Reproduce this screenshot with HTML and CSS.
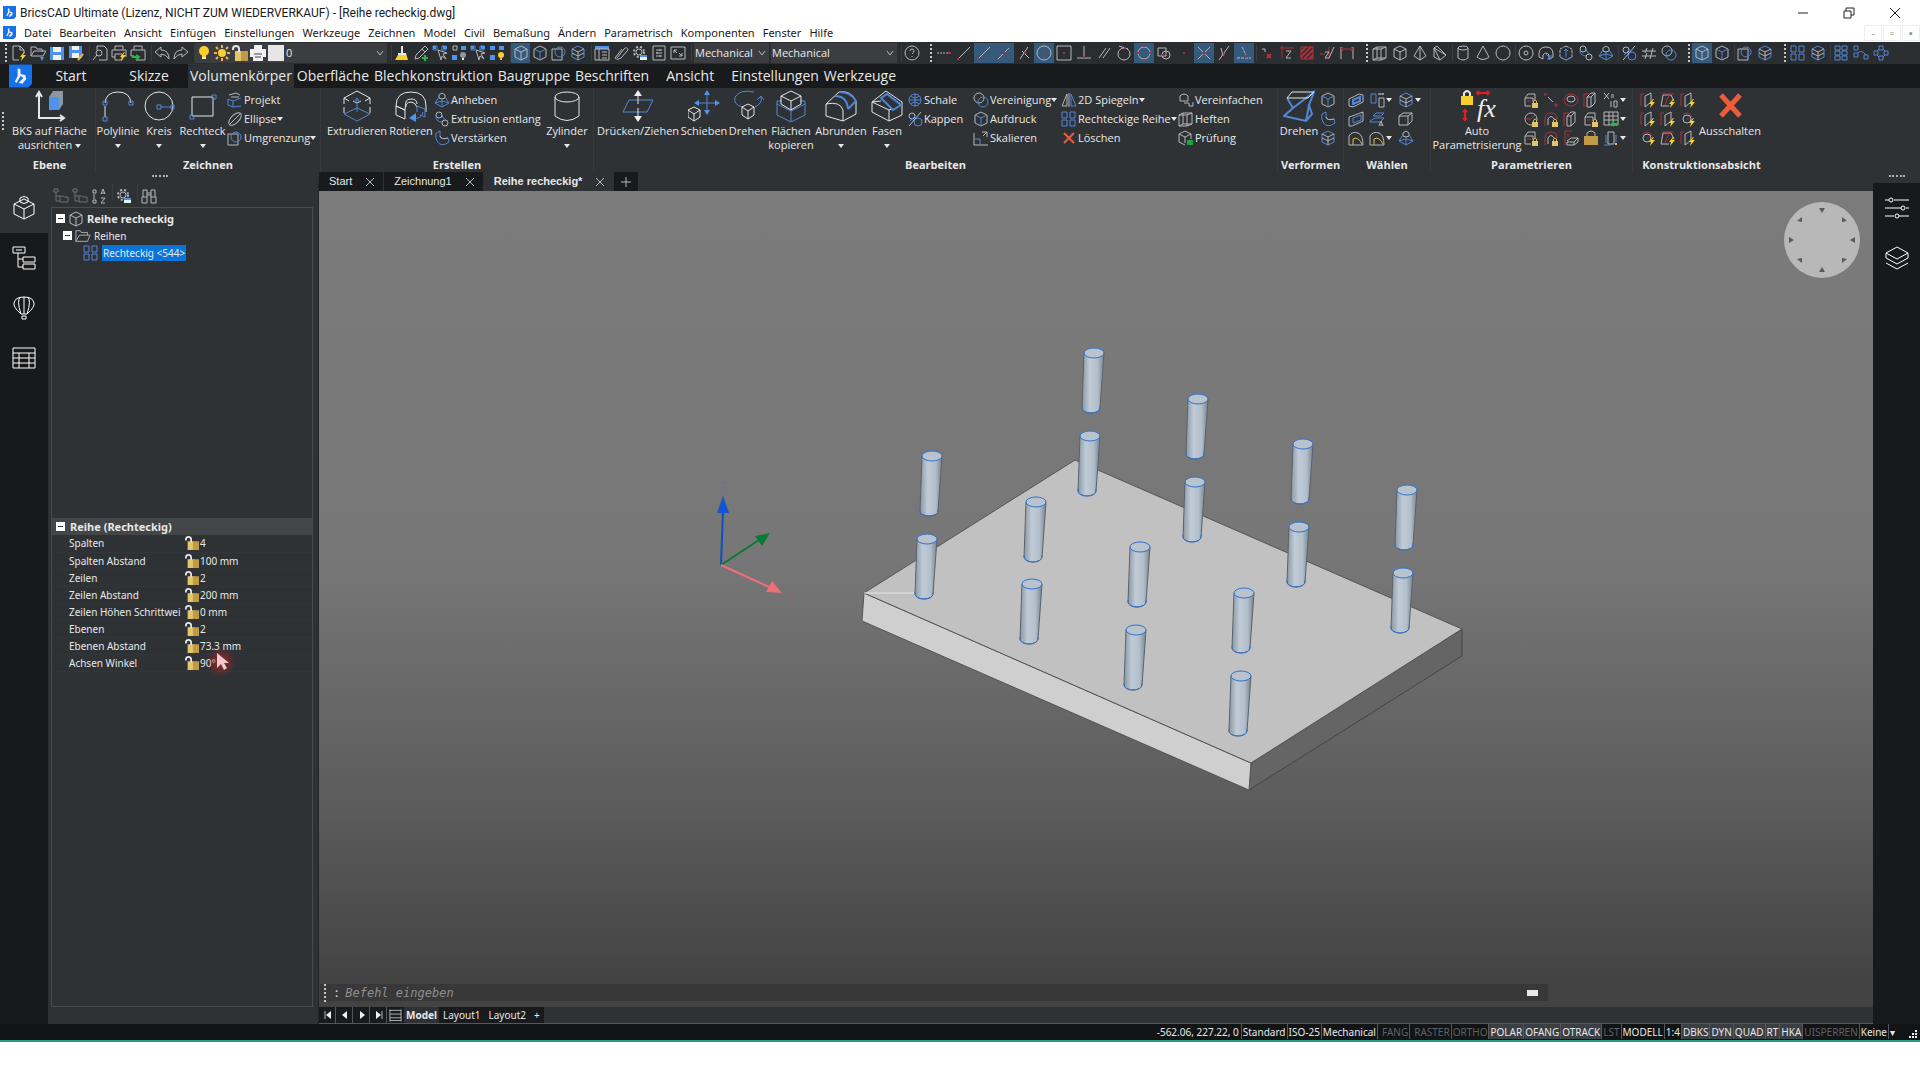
FILE: index.html
```
<!DOCTYPE html>
<html lang="de">
<head>
    <meta charset="UTF-8">
    <meta name="viewport" content="width=device-width, initial-scale=1.0">
    <title>BricsCAD Ultimate</title>
    <link rel="stylesheet" href="styles.css">
</head>
<body>

<!-- icon library -->
<svg class="defs" aria-hidden="true">
    <defs>
        <linearGradient id="tube" x1="0" x2="1" y1="0" y2="0">
            <stop offset="0" stop-color="#8b969f"/><stop offset=".35" stop-color="#bfcbd7"/>
            <stop offset=".7" stop-color="#b3c0cc"/><stop offset="1" stop-color="#78838d"/>
        </linearGradient>
        <radialGradient id="glow"><stop offset="0" stop-color="#d02020" stop-opacity=".7"/><stop offset="1" stop-color="#d02020" stop-opacity="0"/></radialGradient>
    </defs>

    <!-- small pieces that are reused in other icons -->
    <symbol id="bolt" viewBox="0 0 16 16"><path class="fy" d="M13 7l-4 5h2l-1 4 5-6h-3l2-3z"/></symbol>
    <symbol id="plock" viewBox="0 0 16 16"><rect class="fl" x="9" y="11" width="6" height="5"/><path class="y" d="M10.500 11V9q1.500-2 3 0v2"/></symbol>

    <symbol id="logo" viewBox="0 0 24 24"><path class="flogo" d="M0 0h24v20l-4 4H0z"/><path class="fw" d="M9 4l3 1v7l-4 7-2-1 3-6zM12 10l5 1 1 4-4 5-4-1 5-5-3-2z"/></symbol>
    <symbol id="new" viewBox="0 0 16 16"><path d="M2 1h7l4 4v3M2 1v14h6M9 1v4h4"/><use href="#bolt"/></symbol>
    <symbol id="open" viewBox="0 0 16 16"><path d="M1 11V2h5l1 2h5v3M1 11l3-5h12l-3 5z"/><path class="fb" d="M10 12h4l-2 4z"/></symbol>
    <symbol id="save" viewBox="0 0 16 16"><path class="fb" d="M1 2h14v13H1z"/><path class="fw" d="M4 2h8v5H4zM4 10h8v5H4z"/></symbol>
    <symbol id="saveas" viewBox="0 0 16 16"><path class="fb" d="M1 1h13v12H1z"/><path class="fw" d="M4 1h7v4H4zM4 8h7v5H4z"/><path class="y2" d="M10 15l5-6"/></symbol>
    <symbol id="preview" viewBox="0 0 16 16"><path d="M5 1h7l3 3v11H7M5 1v4"/><circle cx="7" cy="8" r="3"/><path d="M5 10l-4 5"/></symbol>
    <symbol id="plot" viewBox="0 0 16 16"><path d="M4 5V1h8v4M4 12H1V5h14v7M4 9h7v6H4z"/><use href="#bolt"/></symbol>
    <symbol id="publish" viewBox="0 0 16 16"><path d="M4 5V1h8v4M4 11H1V5h14v10H6"/><path class="g2" d="M2 12h7M6 10l3 2-3 3"/></symbol>
    <symbol id="undo" viewBox="0 0 16 16"><path d="M1 7l6-5v3q8 0 8 9-3-5-8-5v3z"/></symbol>
    <symbol id="redo" viewBox="0 0 16 16"><path d="M15 7L9 2v3q-8 0-8 9 3-5 8-5v3z"/></symbol>
    <symbol id="bulb" viewBox="0 0 16 16"><circle class="fy" cx="8" cy="6" r="5"/><path class="fy" d="M6 9h4v3H6z"/><path class="w2" d="M6 13h4"/></symbol>
    <symbol id="sun" viewBox="0 0 16 16"><circle class="fy" cx="8" cy="8" r="4"/><path class="y2" d="M8 0v3M8 13v3M0 8h3M13 8h3M2 2l2 2M12 12l2 2M14 2l-2 2M4 12l-2 2"/></symbol>
    <symbol id="unlock" viewBox="0 0 16 16"><path class="fl" d="M3 6h8v10H3z"/><path class="fl2" d="M9 6h7v10H9z"/><path class="w2" d="M1 5V4q0-3 3-3t3 3v3"/></symbol>
    <symbol id="printer" viewBox="0 0 16 16"><path class="fw" d="M4 0h8v4h4v8h-3v4H3v-4H0V4h4z"/><path d="M4 9h8M5 12h6" stroke="#444"/></symbol>
    <symbol id="chev" viewBox="0 0 8 8"><path d="M1 2l3 4 3-4"/></symbol>
    <symbol id="brush" viewBox="0 0 16 16"><path class="fy" d="M4 10l8-2 2 7H1z"/><path class="w2" d="M8 1v7M4 9h8"/></symbol>
    <symbol id="picker" viewBox="0 0 16 16"><path d="M2 14l1-4 6-6 3 3-6 6zM9 4l3-3 3 3-3 3"/><path class="g2" d="M9 13h6M12 10v6"/></symbol>
    <symbol id="selcur" viewBox="0 0 16 16"><path class="b" d="M1 1h4v4H1zM10 1h4v4h-4z"/><path class="fb" d="M1 1h3v3H1zM11 1h4v3h-4z"/><path d="M6 5l3 10 1-4 4 3-3-5 4-1z"/></symbol>
    <symbol id="selblk" viewBox="0 0 16 16"><path d="M2 1h4v4H2z"/><path class="fb" d="M1 10h5v5H1zM10 1h5v4h-5z"/><circle class="fg" cx="12" cy="10" r="3"/><path class="w2" d="M11 14h2"/></symbol>
    <symbol id="sellamp" viewBox="0 0 16 16"><path class="fb" d="M1 1h5v4H1zM10 1h5v4h-5zM1 10h5v5H1z"/><circle class="fy" cx="12" cy="10" r="3"/><path class="y2" d="M11 14h2"/></symbol>
    <symbol id="cube" viewBox="0 0 16 16"><path d="M8 1l6 3v8l-6 3-6-3V4z"/><path class="b" d="M2 4l6 3 6-3M8 7v8"/></symbol>
    <symbol id="cubew" viewBox="0 0 16 16"><path d="M8 1l6 3v8l-6 3-6-3V4zM2 4l6 3 6-3M8 7v8"/></symbol>
    <symbol id="cubeb" viewBox="0 0 16 16"><path class="b" d="M8 1l6 3v8l-6 3-6-3V4z"/><path d="M2 4l6 3 6-3M8 7v8M2 8l6 3 6-3"/></symbol>
    <symbol id="circsq" viewBox="0 0 16 16"><path d="M1 4h10v11H1z"/><circle class="b" cx="9" cy="7" r="5"/></symbol>
    <symbol id="props" viewBox="0 0 16 16"><path class="fb" d="M1 1h14v3H1z"/><path d="M1 4h14v11H1zM8 7h5M8 10h5M8 13h5M5 4v11"/></symbol>
    <symbol id="clip" viewBox="0 0 16 16"><path d="M4 13l7-9q3-3 4 1l-7 8q-4 3-6 0l7-9"/></symbol>
    <symbol id="gear" viewBox="0 0 16 16"><circle cx="7" cy="7" r="3"/><circle cx="7" cy="7" r="5" stroke-dasharray="2 2" stroke-width="2"/><path class="fw" d="M8 10h7v5H8z"/><path class="fb" d="M8 10h7v2H8z"/></symbol>
    <symbol id="sheet" viewBox="0 0 16 16"><path d="M2 1h12v14H2zM5 5h6M5 8h6M5 11h6M9 4v2M6 7v2M9 10v2"/></symbol>
    <symbol id="expand" viewBox="0 0 16 16"><path d="M1 2h14v12H1zM4 8V5h3M4 5l3 3M12 8v3H9M12 11L9 8"/></symbol>
    <symbol id="help" viewBox="0 0 16 16"><circle cx="8" cy="8" r="7"/><path d="M6 6q0-2 2-2t2 2q0 1-2 3M8 11v1"/></symbol>

    <!-- object snaps -->
    <symbol id="s1" viewBox="0 0 16 16"><path d="M1 8h14" stroke-dasharray="2 1"/><path class="r2" d="M12 8h3"/></symbol>
    <symbol id="s2" viewBox="0 0 16 16"><path d="M2 14L14 2"/><path class="r2" d="M1 14h2"/></symbol>
    <symbol id="s3" viewBox="0 0 16 16"><path d="M2 14L13 3"/><path class="r2" d="M7 8h2"/></symbol>
    <symbol id="s4" viewBox="0 0 16 16"><path d="M4 14l8-12M6 6l7 7"/><path class="r2" d="M8 8h2"/></symbol>
    <symbol id="s5" viewBox="0 0 16 16"><circle cx="8" cy="8" r="7"/><path class="r2" d="M7 8h2"/></symbol>
    <symbol id="s6" viewBox="0 0 16 16"><path d="M1 1h14v14H1z"/><path class="r2" d="M7 8h2"/></symbol>
    <symbol id="s7" viewBox="0 0 16 16"><path d="M1 13h14M8 1v12"/><path class="r2" d="M7 12h2"/></symbol>
    <symbol id="s8" viewBox="0 0 16 16"><path d="M3 13l7-10M7 13l7-10"/></symbol>
    <symbol id="s9" viewBox="0 0 16 16"><circle cx="8" cy="9" r="6"/><path d="M3 1l9 3"/><path class="r2" d="M8 3h2"/></symbol>
    <symbol id="s10" viewBox="0 0 16 16"><circle cx="8" cy="8" r="6"/><path class="r2" d="M7 1h2M7 15h2M1 8h2M13 8h2"/></symbol>
    <symbol id="s11" viewBox="0 0 16 16"><path d="M2 3h8v8H2z"/><circle cx="10" cy="10" r="4"/><path class="r2" d="M6 10h2"/></symbol>
    <symbol id="s12" viewBox="0 0 16 16"><path class="r2" d="M7 8h2"/></symbol>
    <symbol id="s13" viewBox="0 0 16 16"><path d="M2 2l12 12M14 2L2 14"/><path class="r2" d="M7 8h2"/></symbol>
    <symbol id="s14" viewBox="0 0 16 16"><path d="M3 15L13 1M5 3l2 8"/><path class="r2" d="M7 9h2"/></symbol>
    <symbol id="s15" viewBox="0 0 16 16"><path d="M1 13h14M6 2l4 8" stroke-dasharray="3 1"/><path class="r2" d="M9 12h2"/></symbol>
    <symbol id="s16" viewBox="0 0 16 16"><path d="M3 4h3v3"/><path class="r2" d="M8 9l4 4M12 9l-4 4"/></symbol>
    <symbol id="s17" viewBox="0 0 16 16"><path class="r" d="M1 3h14M3 1v12"/><path d="M7 6h5l-5 7h5"/></symbol>
    <symbol id="s18" viewBox="0 0 16 16"><path d="M2 2h12v12H2z" stroke="#b33"/><path class="r2" d="M2 7l5-5M2 12L12 2M5 14l9-9M10 14l4-4"/></symbol>
    <symbol id="s19" viewBox="0 0 16 16"><path class="r" d="M1 9h5M10 14V2"/><path d="M6 7h4l-4 6h4M10 13l5-11"/></symbol>
    <symbol id="s20" viewBox="0 0 16 16"><path d="M2 2v12M14 2v12"/><path class="r" d="M2 4h12M4 2L2 4l2 2M12 2l2 2-2 2"/></symbol>

    <!-- solids -->
    <symbol id="box" viewBox="0 0 16 16"><path d="M1 4l4-2v11l-4 2zM5 2h9v11H5M1 15h8l5-2M9 4v11M1 4h8l5-2"/></symbol>
    <symbol id="pyr" viewBox="0 0 16 16"><path d="M8 1L2 11l6 4 6-4zM8 1v14"/></symbol>
    <symbol id="wedge" viewBox="0 0 16 16"><path d="M2 3v9l6 3 6-5zM2 3l3-2 9 9M2 3l6 12"/></symbol>
    <symbol id="cyl" viewBox="0 0 16 16"><ellipse cx="8" cy="3" rx="5" ry="2"/><path d="M3 3v10q5 4 10 0V3"/></symbol>
    <symbol id="cone" viewBox="0 0 16 16"><path d="M8 1L2 12q6 5 12 0z"/></symbol>
    <symbol id="ball" viewBox="0 0 16 16"><circle cx="8" cy="8" r="7"/></symbol>
    <symbol id="torus" viewBox="0 0 16 16"><circle cx="8" cy="8" r="7"/><circle cx="8" cy="8" r="2"/></symbol>
    <symbol id="revs" viewBox="0 0 16 16"><path d="M1 9q0-7 7-7t7 7v3l-4 2v-4q-3-4-6 0v4l-4-2z"/><path class="b" d="M8 9l5 5M9 14h4v-4"/></symbol>
    <symbol id="extrs" viewBox="0 0 16 16"><path d="M8 1l6 3v8l-6 3-6-3V4z" stroke-dasharray="3 1"/><path class="b" d="M2 12l6 3 6-3M8 12V4M6 6l2-2 2 2"/></symbol>
    <symbol id="sweep" viewBox="0 0 16 16"><circle cx="5" cy="4" r="3"/><circle cx="11" cy="12" r="3"/><path class="b" d="M2 5q0 6 6 6M8 4q0 3 4 5"/></symbol>
    <symbol id="loft" viewBox="0 0 16 16"><path d="M5 3l3-2 3 2v3l-3 1-3-1z"/><path class="b" d="M5 5l-4 6 7 4 7-4-4-6M8 7v8M1 11l7-2 7 2"/></symbol>
    <symbol id="thick" viewBox="0 0 16 16"><path class="b" d="M2 3l4-2v5q1 4 8 2l1 4q-8 6-12-1-2-3-1-8z"/><path d="M6 6q1 4 8 2"/></symbol>
    <symbol id="slice" viewBox="0 0 16 16"><circle cx="5" cy="5" r="3"/><circle class="b" cx="11" cy="11" r="4"/><path d="M2 15L14 1"/><path class="b" d="M3 10l6-6"/></symbol>
    <symbol id="sect" viewBox="0 0 16 16"><path d="M1 6h14M1 11h14M4 8l2-5M9 14l3-11M4 14l2-6"/></symbol>
    <symbol id="union" viewBox="0 0 16 16"><circle cx="6" cy="6" r="5"/><circle class="b" cx="10" cy="10" r="5"/></symbol>
    <symbol id="shell" viewBox="0 0 16 16"><circle class="b" cx="8" cy="8" r="6"/><path class="b" d="M2 8h12M8 2v12M4 4q4 4 8 0M4 12q4-4 8 0"/></symbol>
    <symbol id="arr4" viewBox="0 0 16 16"><path class="b" d="M1 1h5v6H1zM9 1h5v6H9zM1 9h5v6H1zM9 9h5v6H9z"/></symbol>
    <symbol id="arr6" viewBox="0 0 16 16"><path class="b" d="M2 1h5v4H2zM9 1h5v4H9zM2 6h5v4H2zM9 6h5v4H9zM2 11h5v4H2zM9 11h5v4H9z"/></symbol>
    <symbol id="arrp" viewBox="0 0 16 16"><path class="b" d="M1 1h4v4H1zM1 8h4v4H1zM11 10h4v4h-4zM5 8q3-4 8 2"/></symbol>
    <symbol id="arro" viewBox="0 0 16 16"><path class="b" d="M6 1h4v4H6zM6 11h4v4H6zM1 6h4v4H1zM11 6h4v4h-4zM4 6l2-2M10 4l2 2M4 10l2 2M12 10l-2 2"/></symbol>

    <!-- small ribbon icons -->
    <symbol id="proj" viewBox="0 0 16 16"><path d="M2 3l7-2 4 2M4 5h8"/><path class="b" d="M1 7l5 2v6l-5-2zM6 9l8-3M6 15l8-1"/></symbol>
    <symbol id="elli" viewBox="0 0 16 16"><ellipse cx="8" cy="8" rx="8" ry="4" transform="rotate(-45 8 8)"/><path d="M3 13L13 3"/></symbol>
    <symbol id="scale" viewBox="0 0 16 16"><path d="M1 3v12h14M9 2h5v5M14 2l-4 4"/><path class="b" d="M1 9h6v6"/></symbol>
    <symbol id="mirror" viewBox="0 0 16 16"><path d="M1 14L6 2v12zM8 1v14"/><path class="b" d="M15 14L10 2v12z"/></symbol>
    <symbol id="del" viewBox="0 0 16 16"><path class="x2" d="M3 3l10 10M13 3L3 13"/></symbol>
    <symbol id="simp" viewBox="0 0 16 16"><path d="M2 8V4q4-4 8 0v5H2zM6 11h5v3h4v-4"/></symbol>
    <symbol id="check" viewBox="0 0 16 16"><path d="M7 1l6 3v5M7 1L1 4v8l6 3M1 4l6 3 6-3M7 7v6"/><rect class="fgr" x="9" y="10" width="6" height="5" rx="1"/></symbol>
    <symbol id="wcube" viewBox="0 0 16 16"><path d="M1 5l4-3h9v8l-4 4H1zM1 5h9v9M10 5l4-3"/></symbol>
    <symbol id="face" viewBox="0 0 16 16"><path d="M1 7l10-5 4 1v7L5 15l-4-1z"/><path class="b2" d="M5 8l7-3v4l-7 3z"/></symbol>
    <symbol id="face2" viewBox="0 0 16 16"><path d="M1 6l3-1 11-4v9L4 15H1z"/><path class="b" d="M5 7l8-3v5l-8 3z"/></symbol>
    <symbol id="seltube" viewBox="0 0 16 16"><path class="b" d="M2 2h5v9H2z"/><path d="M10 6h5v9h-5zM9 2h6M11 1v2M14 1v2"/></symbol>
    <symbol id="selA" viewBox="0 0 16 16"><path class="b" d="M1 10l5-3h9l-4 4H1zM4 5l3-3h8l-3 3z"/><path d="M10 15l2-5 2 5M11 14h3"/></symbol>
    <symbol id="sarc" viewBox="0 0 16 16"><path d="M1 15V6q3-5 9-3 5 2 5 12z"/><path class="y" d="M5 15V9q5-3 9 5"/></symbol>
    <symbol id="plc" viewBox="0 0 16 16"><path d="M2 6l3-4h7v6M2 6h8v4M2 6v8h6"/><path class="r" d="M4 9h4"/><use href="#plock"/></symbol>
    <symbol id="pla" viewBox="0 0 16 16"><path class="r" d="M2 15V8q0-6 6-6t6 6"/><path d="M5 14V8q3-5 6 0"/><use href="#plock"/></symbol>
    <symbol id="prad" viewBox="0 0 16 16"><circle cx="8" cy="8" r="6"/><path class="r" d="M1 8h7l5-5"/><use href="#plock"/></symbol>
    <symbol id="pdot" viewBox="0 0 16 16"><path class="r" d="M1 2h3M11 13h4M13 11v4M2 1v3"/><path d="M5 5l5 5"/></symbol>
    <symbol id="pring" viewBox="0 0 16 16"><ellipse class="r" cx="8" cy="8" rx="7" ry="6"/><ellipse cx="8" cy="7" rx="4" ry="3"/></symbol>
    <symbol id="pbox" viewBox="0 0 16 16"><path d="M4 5l4-4h4v10l-4 4H4zM4 5h4v10M8 5l4-4"/><path class="r" d="M1 15V2M1 2h6"/></symbol>
    <symbol id="pwide" viewBox="0 0 16 16"><path d="M4 11l4-3h7l-4 4H4v3h7l4-3V8M11 12v3"/><path class="r" d="M2 15V1h7M5 4v3"/></symbol>
    <symbol id="plock2" viewBox="0 0 16 16"><path class="fl2" d="M1 6h14v9H1z"/><path d="M4 6V3q4-4 8 0v3"/></symbol>
    <symbol id="px10" viewBox="0 0 16 16"><path d="M1 1l5 6M6 1L1 7M8 3h3M8 5h3M8 9v6M11 9h3v6h-3z"/></symbol>
    <symbol id="ptab" viewBox="0 0 16 16"><path d="M1 1h14v13H1zM1 5h14M1 9h14M6 1v13M10 1v13"/><path class="g2" d="M9 13h6M11 11l-2 2 2 2"/></symbol>
    <symbol id="ptube" viewBox="0 0 16 16"><path d="M5 2h6v12H5z"/><path class="b" d="M3 5v8M1 15h6M13 5v7"/><path class="y2" d="M12 14h2"/></symbol>
    <symbol id="kp" viewBox="0 0 16 16"><path d="M5 4l6-3v9l-6 5z"/><path class="r" d="M1 14V2h3"/><use href="#bolt"/></symbol>
    <symbol id="kt" viewBox="0 0 16 16"><path d="M3 3h8l3 6M3 3L1 14h8"/><path class="r" d="M2 2h12M5 13l4-10"/><use href="#bolt"/></symbol>
    <symbol id="kc" viewBox="0 0 16 16"><circle cx="7" cy="8" r="4"/><path class="r" d="M3 4q5-5 9 2M7 8h2"/><use href="#bolt"/></symbol>

    <!-- large ribbon icons -->
    <symbol id="L-bks" viewBox="0 0 32 32"><path class="w2" d="M5 3v25h25M2 7l3-5 3 5M26 25l4 3-4 3"/><path class="fb" d="M15 7h10v13H15z"/><path class="fg" d="M15 7l4-6h10l-4 6zM25 7l4-6v13l-4 6z"/></symbol>
    <symbol id="L-poly" viewBox="0 0 32 32"><path class="w1" d="M3 13q1-11 13-11t13 11M3 16v11"/><path class="b1" d="M1 11h4v4H1zM27 11h4v4h-4zM1 27h4v4H1z"/></symbol>
    <symbol id="L-circ" viewBox="0 0 32 32"><circle class="w1" cx="16" cy="16" r="14"/><path class="b1" d="M14 15h4v4h-4zM28 15h3v4h-3zM18 17h10"/></symbol>
    <symbol id="L-rect" viewBox="0 0 32 32"><path class="w1" d="M5 7h21v19H5z"/><path class="b1" d="M25 5h4v4h-4zM3 25h4v4H3z"/></symbol>
    <symbol id="L-ext" viewBox="0 0 32 32"><path class="w1" d="M16 1L3 8v6M16 1l13 7v6M3 17v6M29 17v6M3 8l5 3M29 8l-5 3M16 13l-4-2M16 13l4-2"/><path class="b1" d="M3 24l13 7 13-7M3 24l13-6 13 6M16 22V9M13 12l3-4 3 4"/></symbol>
    <symbol id="L-rev" viewBox="0 0 32 32"><path class="w1" d="M1 16Q1 2 16 2t15 14v6M1 16v9l9 4v-9zM10 20q0-8 6-8 4 0 6 5M1 16l9 4M11 17q-2-8 5-8 6 0 6 5"/><path class="b1" d="M22 16l8 3v8l-5-2M22 16v6M28 22q-2 8-10 6"/><path class="fb" d="M21 23l-7 5 7 4z"/></symbol>
    <symbol id="L-cyl" viewBox="0 0 32 32"><ellipse class="w1" cx="16" cy="7" rx="12" ry="5"/><path class="w1" d="M4 7v19q12 9 24 0V7"/></symbol>
    <symbol id="L-push" viewBox="0 0 32 32"><path class="b1" d="M7 10h24l-6 12H1z"/><path class="w1" d="M16 3v11M16 18v11"/><path class="fw" d="M12 6l4-6 4 6zM12 26l4 6 4-6z"/></symbol>
    <symbol id="L-move" viewBox="0 0 32 32"><path class="b1" d="M19 3v21M9 13h21"/><path class="fb" d="M16 5l3-5 3 5zM16 20l3 5 3-5zM11 10l-5 3 5 3zM27 10l5 3-5 3z"/><path class="w1" d="M6 17l6 3v7l-6 4-6-4v-7zM0 20l6 4 6-4M6 24v7"/></symbol>
    <symbol id="L-rot" viewBox="0 0 32 32"><path class="b1" d="M22 2Q8-1 3 7q-2 8 8 10M29 7q2 6-6 10M25 10l4-4 3 4"/><path class="w1" d="M16 14l6 3v8l-6 4-6-4v-8zM10 17l6 4 6-4M16 21v8"/></symbol>
    <symbol id="L-copy" viewBox="0 0 32 32"><path class="b1" d="M7 11H2v14l14 7 14-7V11h-5M2 14l14 7 14-7M16 21v11"/><path class="w1" d="M16 1l10 5v8l-10 6-10-6V6zM6 6l10 5 10-5M16 11v9"/></symbol>
    <symbol id="L-fil" viewBox="0 0 32 32"><path class="w1" d="M1 14L14 2q12-2 17 9v13L18 31 1 26zM1 14q14-3 17 6v11"/><path class="b2" d="M10 6q12 0 13 13M14 2q12 0 17 9M23 19l8-8"/></symbol>
    <symbol id="L-cha" viewBox="0 0 32 32"><path class="w1" d="M1 12L15 1l16 11v13L18 31 1 22zM1 12l9-1M18 31V20L1 12M18 20l3-1"/><path class="b2" d="M10 8l6-4 14 11-8 5z"/></symbol>
    <symbol id="L-twi" viewBox="0 0 32 32"><path class="b2" d="M4 8l6 10-9 8 22 5 6-7-3-9 5-13L10 18M26 15l-3 16"/><path class="w1" d="M9 2h22l-6 6H4z"/></symbol>
    <symbol id="L-off" viewBox="0 0 32 32"><path class="x5" d="M7 5l19 21M26 5L7 26"/></symbol>

    <!-- dock icons -->
    <symbol id="D-struct" viewBox="0 0 24 24"><path d="M12 3l10 5v10l-10 5-10-5V8zM2 8l10 5 10-5M12 13v10"/><path d="M8 2v4q4 3 8 0V2q-4-3-8 0z"/></symbol>
    <symbol id="D-tree" viewBox="0 0 24 24"><path d="M1 1h12v6H1zM11 11h12v5H11zM11 18h12v5H11zM6 7v14h5M6 13h5M4 4h6"/></symbol>
    <symbol id="D-balloon" viewBox="0 0 24 24"><path d="M9 18Q1 11 2 7q1-6 10-6t10 6q1 4-7 11zM9 18Q4 3 9 1M15 18q5-15 0-17M12 1v17M10 20h4v3h-4z"/></symbol>
    <symbol id="D-table" viewBox="0 0 24 24"><path d="M1 2h22v20H1zM1 7h22M1 12h22M1 17h22M7 7v15M17 7v15"/></symbol>
    <symbol id="D-sliders" viewBox="0 0 24 24"><path d="M0 4h4M9 4h15M0 12h16M21 12h3M0 20h9M14 20h10"/><circle cx="6" cy="4" r="2"/><circle cx="18" cy="12" r="2"/><circle cx="12" cy="20" r="2"/></symbol>
    <symbol id="D-layers" viewBox="0 0 24 24"><path d="M12 1l11 6-11 6L1 7zM1 12l11 6 11-6M1 17l11 6 11-6M1 7v5M23 7v5"/></symbol>

    <symbol id="treef" viewBox="0 0 16 16"><path class="dim" d="M1 1h4v3H1zM3 4v9h4M3 8h4M7 8h3l1 1h4v5H7z"/></symbol>
    <symbol id="az" viewBox="0 0 16 16"><path d="M2 2h3v3H2zM2 12h3v3H2zM3 6v5M10 6l2-5 2 5M10 5h4M10 10h4l-4 5h4"/></symbol>
    <symbol id="bino" viewBox="0 0 16 16"><path d="M1 9h5v6H1zM10 9h5v6h-5zM2 9V2h4v7M10 9V2h4v7M6 5h4M6 7h4"/></symbol>
    <symbol id="folder" viewBox="0 0 18 14"><path d="M1 13V1h5l1 2h7v3M1 13l4-7h12l-3 7z"/></symbol>
</svg>

<header class="titlebar">
    <svg class="app-icon"><use href="#logo"/></svg>
    <h1>BricsCAD Ultimate (Lizenz, NICHT ZUM WIEDERVERKAUF) - [Reihe recheckig.dwg]</h1>
    <div class="window-buttons">
        <button aria-label="Minimieren"><svg viewBox="0 0 12 12"><path d="M1 6h10"/></svg></button>
        <button aria-label="Wiederherstellen"><svg viewBox="0 0 12 12"><path d="M1 4h7v7H1zM3 4V1h8v7H8"/></svg></button>
        <button aria-label="Schließen"><svg viewBox="0 0 12 12"><path d="M1 1l10 10M11 1L1 11"/></svg></button>
    </div>
</header>

<nav class="menubar">
    <svg class="app-icon"><use href="#logo"/></svg>
    <a href="#">Datei</a><a href="#">Bearbeiten</a><a href="#">Ansicht</a><a href="#">Einfügen</a><a href="#">Einstellungen</a><a href="#">Werkzeuge</a><a href="#">Zeichnen</a><a href="#">Model</a><a href="#">Civil</a><a href="#">Bemaßung</a><a href="#">Ändern</a><a href="#">Parametrisch</a><a href="#">Komponenten</a><a href="#">Fenster</a><a href="#">Hilfe</a>
    <div class="mdi-buttons">
        <button aria-label="Dokument minimieren">-</button><button aria-label="Dokument wiederherstellen">▫</button><button aria-label="Dokument schließen">▪</button>
    </div>
</nav>

<div class="toolbars">
    <div class="bar">
        <i class="grip"></i>
        <button class="tb" aria-label="Neu"><svg><use href="#new"/></svg></button>
        <button class="tb" aria-label="Öffnen"><svg><use href="#open"/></svg></button>
        <button class="tb" aria-label="Speichern"><svg><use href="#save"/></svg></button>
        <button class="tb" aria-label="Speichern unter"><svg><use href="#saveas"/></svg></button>
        <i class="sep"></i>
        <button class="tb" aria-label="Vorschau"><svg><use href="#preview"/></svg></button>
        <button class="tb" aria-label="Drucken"><svg><use href="#plot"/></svg></button>
        <button class="tb" aria-label="Publizieren"><svg><use href="#publish"/></svg></button>
        <i class="sep"></i>
        <button class="tb" aria-label="Zurück"><svg><use href="#undo"/></svg></button>
        <button class="tb" aria-label="Wiederholen"><svg><use href="#redo"/></svg></button>
        <i class="sep"></i>
        <div class="combo layer-combo">
            <svg><use href="#bulb"/></svg><svg><use href="#sun"/></svg><svg><use href="#unlock"/></svg><svg><use href="#printer"/></svg><i class="swatch"></i>
            <select aria-label="Layer"><option>0</option></select>
            <svg class="chev"><use href="#chev"/></svg>
        </div>
        <i class="sep"></i>
        <button class="tb" aria-label="Eigenschaften übertragen"><svg><use href="#brush"/></svg></button>
        <button class="tb" aria-label="Aufnehmen"><svg><use href="#picker"/></svg></button>
        <button class="tb" aria-label="Auswahl"><svg><use href="#selcur"/></svg></button>
        <button class="tb" aria-label="Isolieren"><svg><use href="#selblk"/></svg></button>
        <button class="tb" aria-label="Ausblenden"><svg><use href="#selcur"/></svg></button>
        <button class="tb" aria-label="Einblenden"><svg><use href="#sellamp"/></svg></button>
        <i class="sep"></i>
        <button class="tb on" aria-label="Körper"><svg><use href="#cubew"/></svg></button>
        <button class="tb" aria-label="Flächen"><svg><use href="#cube"/></svg></button>
        <button class="tb" aria-label="Kanten"><svg><use href="#circsq"/></svg></button>
        <button class="tb" aria-label="Drahtmodell"><svg><use href="#cubeb"/></svg></button>
        <i class="sep"></i>
        <button class="tb" aria-label="Eigenschaften"><svg><use href="#props"/></svg></button>
        <button class="tb" aria-label="Anhang"><svg><use href="#clip"/></svg></button>
        <button class="tb" aria-label="Einstellungen"><svg><use href="#gear"/></svg></button>
        <button class="tb" aria-label="Explorer"><svg><use href="#sheet"/></svg></button>
        <button class="tb" aria-label="Vollbild"><svg><use href="#expand"/></svg></button>
        <i class="sep"></i>
        <div class="combo style-combo"><select aria-label="Arbeitsbereich"><option>Mechanical</option></select><svg class="chev"><use href="#chev"/></svg></div>
        <div class="combo wide-combo"><select aria-label="Profil"><option>Mechanical</option></select><svg class="chev"><use href="#chev"/></svg></div>
        <i class="sep"></i>
        <button class="tb" aria-label="Hilfe"><svg><use href="#help"/></svg></button>
    </div>
    <div class="bar wide">
        <i class="grip"></i>
        <button class="tb" aria-label="Temporär"><svg><use href="#s1"/></svg></button>
        <button class="tb" aria-label="Von"><svg><use href="#s2"/></svg></button>
        <button class="tb on" aria-label="Endpunkt"><svg><use href="#s2"/></svg></button>
        <button class="tb on" aria-label="Mittelpunkt"><svg><use href="#s3"/></svg></button>
        <button class="tb" aria-label="Nächster"><svg><use href="#s4"/></svg></button>
        <button class="tb on" aria-label="Zentrum"><svg><use href="#s5"/></svg></button>
        <button class="tb" aria-label="Geometrisches Zentrum"><svg><use href="#s6"/></svg></button>
        <button class="tb" aria-label="Lot"><svg><use href="#s7"/></svg></button>
        <button class="tb" aria-label="Parallel"><svg><use href="#s8"/></svg></button>
        <button class="tb" aria-label="Tangente"><svg><use href="#s9"/></svg></button>
        <button class="tb on" aria-label="Quadrant"><svg><use href="#s10"/></svg></button>
        <button class="tb" aria-label="Einfügepunkt"><svg><use href="#s11"/></svg></button>
        <button class="tb" aria-label="Punkt"><svg><use href="#s12"/></svg></button>
        <button class="tb on" aria-label="Schnittpunkt"><svg><use href="#s13"/></svg></button>
        <button class="tb" aria-label="Angenommener Schnittpunkt"><svg><use href="#s14"/></svg></button>
        <button class="tb on" aria-label="Hilfslinie"><svg><use href="#s15"/></svg></button>
        <i class="sep"></i>
        <button class="tb" aria-label="Kein Fang"><svg><use href="#s16"/></svg></button>
        <button class="tb" aria-label="Z Fang"><svg><use href="#s17"/></svg></button>
        <button class="tb" aria-label="Schraffur Fang"><svg><use href="#s18"/></svg></button>
        <button class="tb" aria-label="Negatives Z"><svg><use href="#s19"/></svg></button>
        <button class="tb" aria-label="Bemaßungsfang"><svg><use href="#s20"/></svg></button>
    </div>
    <div class="bar wide">
        <i class="grip"></i>
        <button class="tb" aria-label="Polykörper"><svg><use href="#box"/></svg></button>
        <button class="tb" aria-label="Quader"><svg><use href="#cubew"/></svg></button>
        <button class="tb" aria-label="Pyramide"><svg><use href="#pyr"/></svg></button>
        <button class="tb" aria-label="Keil"><svg><use href="#wedge"/></svg></button>
        <i class="sep"></i>
        <button class="tb" aria-label="Zylinder"><svg><use href="#cyl"/></svg></button>
        <button class="tb" aria-label="Kegel"><svg><use href="#cone"/></svg></button>
        <button class="tb" aria-label="Kugel"><svg><use href="#ball"/></svg></button>
        <i class="sep"></i>
        <button class="tb" aria-label="Torus"><svg><use href="#torus"/></svg></button>
        <button class="tb" aria-label="Rotieren"><svg><use href="#revs"/></svg></button>
        <button class="tb" aria-label="Extrudieren"><svg><use href="#extrs"/></svg></button>
        <button class="tb" aria-label="Extrusion entlang"><svg><use href="#sweep"/></svg></button>
        <button class="tb" aria-label="Anheben"><svg><use href="#loft"/></svg></button>
        <i class="sep"></i>
        <button class="tb" aria-label="Kappen"><svg><use href="#slice"/></svg></button>
        <button class="tb" aria-label="Schnitt"><svg><use href="#sect"/></svg></button>
        <button class="tb" aria-label="Überlagern"><svg><use href="#union"/></svg></button>
    </div>
    <div class="bar wide">
        <i class="grip"></i>
        <button class="tb on" aria-label="Auswahl Körper"><svg><use href="#cubew"/></svg></button>
        <button class="tb" aria-label="Auswahl Kanten"><svg><use href="#cube"/></svg></button>
        <i class="sep"></i>
        <button class="tb" aria-label="Auswahl Flächen"><svg><use href="#circsq"/></svg></button>
        <button class="tb" aria-label="Auswahl Netz"><svg><use href="#cubeb"/></svg></button>
    </div>
    <div class="bar wide">
        <i class="grip"></i>
        <button class="tb" aria-label="Reihe"><svg><use href="#arr4"/></svg></button>
        <button class="tb" aria-label="3D Reihe"><svg><use href="#cubeb"/></svg></button>
        <i class="sep"></i>
        <button class="tb" aria-label="Rechteckige Reihe"><svg><use href="#arr6"/></svg></button>
        <button class="tb" aria-label="Pfad Reihe"><svg><use href="#arrp"/></svg></button>
        <button class="tb" aria-label="Polare Reihe"><svg><use href="#arro"/></svg></button>
    </div>
</div>

<nav class="ribbon-tabs">
    <svg class="ribbon-logo"><use href="#logo"/></svg>
    <button>Start</button><button>Skizze</button><button class="current">Volumenkörper</button><button>Oberfläche</button><button>Blechkonstruktion</button><button>Baugruppe</button><button>Beschriften</button><button>Ansicht</button><button>Einstellungen</button><button>Werkzeuge</button>
</nav>

<div class="ribbon">
    <section class="group g-ebene">
        <i class="grip"></i>
        <div class="tools">
            <button class="big"><svg><use href="#L-bks"/></svg>BKS auf Fläche<span>ausrichten <i class="caret"></i></span></button>
        </div>
        <h2>Ebene</h2>
    </section>

    <section class="group g-zeichnen">
        <div class="tools">
            <button class="big"><svg><use href="#L-poly"/></svg>Polylinie<span><i class="caret"></i></span></button>
            <button class="big"><svg><use href="#L-circ"/></svg>Kreis<span><i class="caret"></i></span></button>
            <button class="big"><svg><use href="#L-rect"/></svg>Rechteck<span><i class="caret"></i></span></button>
            <div class="stack">
                <button><svg><use href="#proj"/></svg>Projekt</button>
                <button><svg><use href="#elli"/></svg>Ellipse<i class="caret"></i></button>
                <button><svg><use href="#circsq"/></svg>Umgrenzung<i class="caret"></i></button>
            </div>
        </div>
        <h2>Zeichnen</h2>
    </section>

    <section class="group g-erstellen">
        <div class="tools">
            <button class="big"><svg><use href="#L-ext"/></svg>Extrudieren</button>
            <button class="big"><svg><use href="#L-rev"/></svg>Rotieren</button>
            <div class="stack">
                <button><svg><use href="#loft"/></svg>Anheben</button>
                <button><svg><use href="#sweep"/></svg>Extrusion entlang</button>
                <button><svg><use href="#thick"/></svg>Verstärken</button>
            </div>
            <button class="big"><svg><use href="#L-cyl"/></svg>Zylinder<span><i class="caret"></i></span></button>
        </div>
        <h2>Erstellen</h2>
    </section>

    <section class="group g-bearbeiten">
        <div class="tools">
            <button class="big"><svg><use href="#L-push"/></svg>Drücken/Ziehen</button>
            <button class="big"><svg><use href="#L-move"/></svg>Schieben</button>
            <button class="big"><svg><use href="#L-rot"/></svg>Drehen</button>
            <button class="big"><svg><use href="#L-copy"/></svg>Flächen<span>kopieren</span></button>
            <button class="big"><svg><use href="#L-fil"/></svg>Abrunden<span><i class="caret"></i></span></button>
            <button class="big"><svg><use href="#L-cha"/></svg>Fasen<span><i class="caret"></i></span></button>
            <div class="stack">
                <button><svg><use href="#shell"/></svg>Schale</button>
                <button><svg><use href="#slice"/></svg>Kappen</button>
            </div>
            <div class="stack">
                <button><svg><use href="#union"/></svg>Vereinigung<i class="caret"></i></button>
                <button><svg><use href="#cube"/></svg>Aufdruck</button>
                <button><svg><use href="#scale"/></svg>Skalieren</button>
            </div>
            <div class="stack">
                <button><svg><use href="#mirror"/></svg>2D Spiegeln<i class="caret"></i></button>
                <button><svg><use href="#arr4"/></svg>Rechteckige Reihe<i class="caret"></i></button>
                <button><svg><use href="#del"/></svg>Löschen</button>
            </div>
            <div class="stack">
                <button><svg><use href="#simp"/></svg>Vereinfachen</button>
                <button><svg><use href="#box"/></svg>Heften</button>
                <button><svg><use href="#check"/></svg>Prüfung</button>
            </div>
        </div>
        <h2>Bearbeiten</h2>
    </section>

    <section class="group g-verformen">
        <div class="tools">
            <button class="big"><svg><use href="#L-twi"/></svg>Drehen</button>
            <div class="stack">
                <button aria-label="Verformen Quader"><svg><use href="#cube"/></svg></button>
                <button aria-label="Verformen Kante"><svg><use href="#thick"/></svg></button>
                <button aria-label="Verformen Punkt"><svg><use href="#cubeb"/></svg></button>
            </div>
        </div>
        <h2>Verformen</h2>
    </section>

    <section class="group g-waehlen">
        <div class="tools">
            <div class="stack">
                <button aria-label="Fläche wählen"><svg><use href="#face"/></svg></button>
                <button aria-label="Ebene wählen"><svg><use href="#face2"/></svg></button>
                <button aria-label="Bogen wählen"><svg><use href="#sarc"/></svg></button>
            </div>
            <div class="stack">
                <button aria-label="Ähnliche wählen"><svg><use href="#seltube"/></svg><i class="caret"></i></button>
                <button aria-label="Gleiche Fläche"><svg><use href="#selA"/></svg></button>
                <button aria-label="Gleicher Radius"><svg><use href="#sarc"/></svg><i class="caret"></i></button>
            </div>
            <div class="stack">
                <button aria-label="Körper wählen"><svg><use href="#cubeb"/></svg><i class="caret"></i></button>
                <button aria-label="Kante wählen"><svg><use href="#wcube"/></svg></button>
                <button aria-label="Loch wählen"><svg><use href="#loft"/></svg></button>
            </div>
        </div>
        <h2>Wählen</h2>
    </section>

    <section class="group g-param">
        <div class="tools">
            <button class="big">
                <svg class="fx-icon" viewBox="0 0 40 32"><path class="fy" d="M4 6h12v9H4z"/><path class="w2" d="M7 6V3q3-4 6 0v3"/><path class="r3" d="M20 3h12M22 1l-2 2 2 2M30 1l2 2-2 2M8 20v10M6 22l2-2 2 2M6 28l2 2 2-2"/><text x="20" y="27" class="fx">fx</text></svg>
                Auto<span>Parametrisierung</span>
            </button>
            <div class="stack">
                <button aria-label="Starr"><svg><use href="#plc"/></svg></button>
                <button aria-label="Radius fest"><svg><use href="#prad"/></svg></button>
                <button aria-label="Abstand fest"><svg><use href="#plc"/></svg></button>
            </div>
            <div class="stack">
                <button aria-label="Koinzident"><svg><use href="#pdot"/></svg></button>
                <button aria-label="Tangential"><svg><use href="#pla"/></svg></button>
                <button aria-label="Winkel"><svg><use href="#pla"/></svg></button>
            </div>
            <div class="stack">
                <button aria-label="Konzentrisch"><svg><use href="#pring"/></svg></button>
                <button aria-label="Parallel fest"><svg><use href="#pbox"/></svg></button>
                <button aria-label="Breite"><svg><use href="#pwide"/></svg></button>
            </div>
            <div class="stack">
                <button aria-label="Senkrecht"><svg><use href="#pbox"/></svg></button>
                <button aria-label="Körper fest"><svg><use href="#plc"/></svg></button>
                <button aria-label="Sperren"><svg><use href="#plock2"/></svg></button>
            </div>
            <div class="stack">
                <button aria-label="Parameter"><svg><use href="#px10"/></svg><i class="caret"></i></button>
                <button aria-label="Tabelle"><svg><use href="#ptab"/></svg><i class="caret"></i></button>
                <button aria-label="Explosion"><svg><use href="#ptube"/></svg><i class="caret"></i></button>
            </div>
        </div>
        <h2>Parametrieren</h2>
    </section>

    <section class="group g-konstr">
        <div class="tools">
            <div class="stack">
                <button aria-label="Koplanar"><svg><use href="#kp"/></svg></button>
                <button aria-label="Parallelität"><svg><use href="#kp"/></svg></button>
                <button aria-label="Gleicher Radius erkennen"><svg><use href="#kc"/></svg></button>
            </div>
            <div class="stack">
                <button aria-label="Rechtwinklig"><svg><use href="#kt"/></svg></button>
                <button aria-label="Tangente erkennen"><svg><use href="#kp"/></svg></button>
                <button aria-label="Symmetrie"><svg><use href="#kt"/></svg></button>
            </div>
            <div class="stack">
                <button aria-label="Abstand erkennen"><svg><use href="#kp"/></svg></button>
                <button aria-label="Konzentrisch erkennen"><svg><use href="#kc"/></svg></button>
                <button aria-label="Ebene erkennen"><svg><use href="#kp"/></svg></button>
            </div>
            <button class="big"><svg><use href="#L-off"/></svg>Ausschalten</button>
        </div>
        <h2>Konstruktionsabsicht</h2>
    </section>
</div>

<main class="workspace">
    <aside class="left-dock">
        <div class="dock-grip"><i></i></div>
        <div class="dock-body">
            <nav class="side-tabs">
                <button class="active" aria-label="Struktur"><svg><use href="#D-struct"/></svg></button>
                <button aria-label="Baugruppe"><svg><use href="#D-tree"/></svg></button>
                <button aria-label="Tipps"><svg><use href="#D-balloon"/></svg></button>
                <button aria-label="Tabellen"><svg><use href="#D-table"/></svg></button>
            </nav>
            <div class="panel">
                <div class="panel-tools">
                    <button aria-label="Erweitern"><svg><use href="#treef"/></svg></button>
                    <button aria-label="Reduzieren"><svg><use href="#treef"/></svg></button>
                    <button aria-label="Sortieren"><svg><use href="#az"/></svg></button>
                    <i class="sep"></i>
                    <button aria-label="Konfigurieren"><svg><use href="#gear"/></svg></button>
                    <i class="sep"></i>
                    <button aria-label="Suchen"><svg><use href="#bino"/></svg></button>
                </div>
                <div class="panel-box">
                    <ul class="tree">
                        <li class="root"><button class="toggle" aria-label="Reduzieren"></button><svg><use href="#cubew"/></svg>Reihe recheckig</li>
                        <li class="level-1"><button class="toggle" aria-label="Reduzieren"></button><svg><use href="#folder"/></svg>Reihen</li>
                        <li class="level-2"><svg><use href="#arr4"/></svg><span class="selected">Rechteckig &lt;544&gt;</span></li>
                    </ul>
                    <div class="props">
                        <h3><button class="toggle" aria-label="Reduzieren"></button>Reihe (Rechteckig)</h3>
                        <table>
                            <tr><th>Spalten</th><td><svg><use href="#unlock"/></svg>4</td></tr>
                            <tr><th>Spalten Abstand</th><td><svg><use href="#unlock"/></svg>100 mm</td></tr>
                            <tr><th>Zeilen</th><td><svg><use href="#unlock"/></svg>2</td></tr>
                            <tr><th>Zeilen Abstand</th><td><svg><use href="#unlock"/></svg>200 mm</td></tr>
                            <tr><th>Zeilen Höhen Schrittwei</th><td><svg><use href="#unlock"/></svg>0 mm</td></tr>
                            <tr><th>Ebenen</th><td><svg><use href="#unlock"/></svg>2</td></tr>
                            <tr><th>Ebenen Abstand</th><td><svg><use href="#unlock"/></svg>73.3 mm</td></tr>
                            <tr><th>Achsen Winkel</th><td><svg><use href="#unlock"/></svg>90°</td></tr>
                        </table>
                        <svg class="cursor" viewBox="0 0 32 36"><circle cx="16" cy="18" r="15" fill="url(#glow)" stroke="none"/><path d="M12 9v15l4-4 3 6 3-2-3-5h5z" fill="#f3c9c9" stroke="none"/></svg>
                    </div>
                </div>
            </div>
        </div>
    </aside>

    <div class="document">
        <div class="doc-tabs">
            <div class="doc-tab">Start<button aria-label="Start schließen"><svg viewBox="0 0 10 10"><path d="M1 1l8 8M9 1L1 9"/></svg></button></div>
            <div class="doc-tab">Zeichnung1<button aria-label="Zeichnung1 schließen"><svg viewBox="0 0 10 10"><path d="M1 1l8 8M9 1L1 9"/></svg></button></div>
            <div class="doc-tab open">Reihe recheckig*<button aria-label="Reihe schließen"><svg viewBox="0 0 10 10"><path d="M1 1l8 8M9 1L1 9"/></svg></button></div>
            <button class="doc-add" aria-label="Neuer Tab"><svg viewBox="0 0 10 10"><path d="M5 0v10M0 5h10"/></svg></button>
        </div>

        <div class="viewport">
            <svg class="drawing" viewBox="319 191 1554 816" role="img" aria-label="Modellansicht">
                <defs>
                    <g id="pin">
                        <path d="M-10 0L-12 55a9 5 0 0 0 18 0L10 0z" fill="url(#tube)" stroke="#59636e"/>
                        <path d="M-12 53v2a9 5 0 0 0 18 0v-2" class="edge"/>
                        <ellipse rx="10" ry="5" fill="#b9c3ce" class="top-edge"/>
                    </g>
                </defs>
                <!-- base plate -->
                <path d="M1251 763L1462 629v27L1249 790z" fill="#656565" stroke="#444"/>
                <path d="M864 593L1251 763l-2 27L862 621z" fill="#cfcfcf" stroke="#555"/>
                <path d="M864 593L1075 460l387 169-211 134z" fill="#c1c1c1" stroke="#555"/>
                <path d="M864 593h51" stroke="#e4e4e4"/>
                <!-- array of cylinders -->
                <use href="#pin" x="1090" y="436"/><use href="#pin" x="1195" y="482"/><use href="#pin" x="1299" y="527"/><use href="#pin" x="1403" y="573"/>
                <use href="#pin" x="1094" y="353"/><use href="#pin" x="1198" y="399"/><use href="#pin" x="1303" y="444"/><use href="#pin" x="1407" y="490"/>
                <use href="#pin" x="927" y="539"/><use href="#pin" x="1032" y="584"/><use href="#pin" x="1136" y="630"/><use href="#pin" x="1241" y="676"/>
                <use href="#pin" x="932" y="456"/><use href="#pin" x="1036" y="502"/><use href="#pin" x="1140" y="547"/><use href="#pin" x="1244" y="593"/>
                <!-- coordinate axes -->
                <path d="M721 565l2-55" stroke="#0c4fc0" stroke-width="2"/><path d="M717 513l6-17 6 17z" fill="#0f56d0"/>
                <path d="M721 565l38-25" stroke="#0a7a37" stroke-width="2"/><path d="M770 533l-15 3 7 10z" fill="#0a7a37"/>
                <path d="M721 565l48 22" stroke="#ee7078" stroke-width="2"/><path d="M782 593l-10-12-6 11z" fill="#ee7078"/>
                <path d="M787 593l6 6M793 593l-6 6" stroke="#95696b"/>
                <path d="M721 482h5l-5 6h5" stroke="#647786"/>
                <!-- look-from compass -->
                <circle cx="1822" cy="240" r="38" fill="#b8b8b8"/>
                <g fill="#5a5a5a"><path d="M1819 208h6l-3 5zM1819 272h6l-3-5zM1789 237v6l5-3zM1855 237v6l-5-3zM1797 221l5-4v5zM1847 221l-5-4v5zM1797 259l5 4v-5zM1847 259l-5 4v-5z"/></g>
            </svg>
            <label class="command">
                <i class="grip"></i><span>:</span>
                <input type="text" placeholder="Befehl eingeben">
                <i class="command-min"></i>
            </label>
        </div>

        <div class="layouts">
            <button class="nav" aria-label="Erstes"><svg viewBox="0 0 10 10"><path d="M2 1v8"/><path class="fw" d="M8 1v8L3 5z"/></svg></button>
            <button class="nav" aria-label="Vorheriges"><svg viewBox="0 0 10 10"><path class="fw" d="M7 1v8L2 5z"/></svg></button>
            <button class="nav" aria-label="Nächstes"><svg viewBox="0 0 10 10"><path class="fw" d="M3 1v8l5-4z"/></svg></button>
            <button class="nav" aria-label="Letztes"><svg viewBox="0 0 10 10"><path d="M8 1v8"/><path class="fw" d="M2 1v8l5-4z"/></svg></button>
            <button class="list" aria-label="Liste"><svg viewBox="0 0 14 14"><path d="M1 1v13M13 1v13M1 2h12M1 6h12M1 10h12M1 13h12"/></svg></button>
            <button class="model">Model</button><button>Layout1</button><button>Layout2</button><button>+</button>
        </div>
    </div>

    <aside class="right-dock">
        <div class="dock-grip"><i></i></div>
        <nav class="side-tabs">
            <button aria-label="Eigenschaften"><svg><use href="#D-sliders"/></svg></button>
            <button aria-label="Layer"><svg><use href="#D-layers"/></svg></button>
        </nav>
    </aside>
</main>

<footer class="statusbar">
    <span class="coords">-562.06, 227.22, 0</span>
    <button>Standard</button><button>ISO-25</button><button>Mechanical</button><button class="off roomy">FANG</button><button class="off roomy">RASTER</button><button class="off">ORTHO</button><button class="on">POLAR</button><button class="on">OFANG</button><button class="on">OTRACK</button><button class="off">LST</button><button>MODELL</button><button>1:4</button><button class="on">DBKS</button><button class="on">DYN</button><button class="on">QUAD</button><button class="on">RT</button><button class="on">HKA</button><button class="off">UISPERREN</button><button>Keine</button><button aria-label="Mehr">▾</button>
    <svg class="resize" viewBox="0 0 10 10"><path class="fw" d="M7 1h2v2H7zM4 4h2v2H4zM7 4h2v2H7zM1 7h2v2H1zM4 7h2v2H4zM7 7h2v2H7z"/></svg>
</footer>
<div class="page-bottom"></div>

</body>
</html>
```
FILE: styles.css
```
* {
    box-sizing: border-box;
}
body {
    margin: 0;
    height: 100vh;
    display: flex;
    flex-direction: column;
    background-color: white;
    color: #e8e8e8;
    font-family: "Open Sans", "Noto Sans", sans-serif;
    font-size: 11px;
    line-height: 14px;
    overflow: hidden;
}
button, select, input {
    font: inherit;
    color: inherit;
    background: none;
    border: 0;
    padding: 0;
    margin: 0;
}
a {
    color: inherit;
    text-decoration: none;
}
h1, h2, h3, ul {
    margin: 0;
    padding: 0;
}
svg {
    display: block;
    flex: none;
    fill: none;
    stroke: #b4b8bc;
}
.defs {
    position: absolute;
    width: 0;
    height: 0;
}

/* icon colours */
.b, .b1, .b2 { stroke: #5286d6; }
.w1, .w2 { stroke: #e4e6e8; }
.r, .r2 { stroke: #b0303a; }
.r3 { stroke: #e02020; stroke-width: 2; }
.y, .y2 { stroke: #e8b84a; }
.g2 { stroke: #2fb34a; }
.x2, .x5 { stroke: #ee5a3c; }
.dim { stroke: #6c7074; }
.b2, .w2, .r2, .y2, .g2, .x2 { stroke-width: 2; }
.x5 { stroke-width: 5; }
.fb { fill: #4f93ea; stroke: none; }
.fw { fill: #f0f0f0; stroke: none; }
.fy { fill: #f7cf2e; stroke: none; }
.fl { fill: #e3c56e; stroke: none; }
.fl2 { fill: #c09a45; stroke: none; }
.fg { fill: #8e979f; stroke: none; }
.fgr { fill: #18a83c; stroke: none; }
.flogo { fill: #1672ea; stroke: none; }
.fx {
    fill: #f0f0f0;
    stroke: none;
    font: italic 26px "Liberation Serif", serif;
}

/* title and menu */
.titlebar, .menubar {
    display: flex;
    align-items: center;
    color: #1a1a1a;
    background-color: white;
    font-family: "Noto Sans", "Open Sans", sans-serif;
}
.titlebar {
    height: 23px;
    padding: 2px 0 0 3px;
}
.titlebar h1 {
    flex: 1;
    font: 12px Roboto, "Noto Sans", sans-serif;
    margin-left: 4px;
}
.app-icon {
    width: 13px;
    height: 13px;
}
.window-buttons button {
    width: 46px;
    height: 20px;
}
.window-buttons {
    display: flex;
    padding-right: 2px;
}
.window-buttons svg {
    width: 12px;
    height: 12px;
    margin: auto;
    stroke: #222;
}
.menubar {
    height: 19px;
    gap: 8px;
    padding: 0 0 0 3px;
}
.mdi-buttons {
    margin-left: auto;
    display: flex;
    gap: 1px;
}
.mdi-buttons button {
    width: 18px;
    border: 1px solid #eee;
    color: #999;
}

/* toolbars */
.toolbars {
    display: flex;
    height: 22px;
    padding-left: 5px;
    gap: 9px;
    background-color: #2b2e31;
}
.bar {
    display: flex;
    align-items: center;
}
.grip {
    width: 4px;
    height: 18px;
    border-left: 2px dotted #c8c8c8;
}
.tb {
    width: 19px;
    height: 20px;
}
.wide .tb {
    width: 20px;
}
.tb svg {
    width: 16px;
    height: 16px;
    margin: auto;
}
.tb.on {
    background-color: #365a7c;
}
.sep {
    width: 5px;
    height: 16px;
    border-right: 1px solid #3a3e41;
}
.wide .sep {
    width: 3px;
}
.combo {
    display: flex;
    align-items: center;
    height: 20px;
    gap: 2px;
    padding: 0 3px 0 1px;
    background-color: #3b3d41;
}
.combo svg, .swatch {
    width: 16px;
    height: 16px;
}
.swatch {
    background-color: #e6e6e6;
}
.combo select {
    flex: 1;
    appearance: none;
    min-width: 0;
}
.combo .chev {
    width: 8px;
    height: 8px;
}
.layer-combo {
    width: 192px;
}
.style-combo {
    width: 75px;
    margin: 0 2px;
}
.wide-combo {
    width: 126px;
}

/* ribbon */
.ribbon-tabs {
    display: flex;
    align-items: stretch;
    height: 24px;
    padding-left: 9px;
    background-color: #191a1c;
    font-size: 14px;
    line-height: 24px;
}
.ribbon-logo {
    width: 23px;
    height: 24px;
}
.ribbon-tabs button {
    min-width: 78px;
    padding: 0 2px;
}
.ribbon-tabs .current {
    background-color: #2e3235;
}
.ribbon {
    display: flex;
    height: 84px;
    background-color: #2e3235;
}
.group {
    display: flex;
    flex-direction: column;
    border-right: 1px solid #363a3d;
}
.group h2 {
    font-size: 11px;
    text-align: center;
}
.tools {
    display: grid;
    height: 70px;
    padding-top: 2px;
}
.big {
    display: flex;
    flex-direction: column;
    align-items: center;
    white-space: nowrap;
}
.big svg {
    width: 32px;
    height: 32px;
    margin-bottom: 2px;
}
.big span {
    height: 14px;
}
.big .fx-icon {
    width: 40px;
}
.caret {
    display: inline-block;
    vertical-align: middle;
    border: 3px solid transparent;
    border-top: 4px solid #e8e8e8;
    border-bottom: 0;
}
.stack button {
    display: flex;
    align-items: center;
    height: 19px;
    white-space: nowrap;
}
.stack svg {
    width: 16px;
    height: 16px;
    margin-right: 1px;
}
.g-ebene { width: 96px; padding-left: 4px; position: relative; }
.g-ebene .grip { position: absolute; left: 2px; top: 24px; }
.g-zeichnen { width: 225px; }
.g-zeichnen .tools { grid-template-columns: 44px 38px 49px 1fr; }
.g-erstellen { width: 273px; }
.g-erstellen .tools { grid-template-columns: 62px 46px 108px 50px; padding-left: 5px; }
.g-bearbeiten { width: 684px; }
.g-bearbeiten .tools { grid-template-columns: 82px 50px 38px 48px 52px 40px 66px 88px 117px 1fr; padding-left: 3px; }
.g-verformen { width: 66px; }
.g-verformen .tools { grid-template-columns: 42px 1fr; }
.g-waehlen { width: 87px; }
.g-waehlen .tools { grid-template-columns: 21px 29px 1fr; padding-left: 4px; }
.g-param { width: 202px; }
.g-param .tools { grid-template-columns: 92px 20px 20px 20px 20px 1fr; }
.g-konstr { width: 137px; border: 0; }
.g-konstr .tools { grid-template-columns: 20px 20px 20px 60px; padding-left: 7px; }

/* work area */
.workspace {
    flex: 1;
    min-height: 0;
    display: grid;
    grid-template-columns: 319px 1fr 47px;
    background-color: #2e3235;
}
.left-dock, .right-dock, .document {
    display: flex;
    flex-direction: column;
    min-height: 0;
}
.dock-grip {
    height: 11px;
    padding-top: 3px;
}
.dock-grip i {
    display: block;
    width: 16px;
    margin: auto;
    border-top: 2px dotted #b0b0b0;
}
.dock-body {
    flex: 1;
    display: flex;
    min-height: 0;
}
.side-tabs {
    width: 48px;
    background-color: #18191b;
}
.right-dock .side-tabs {
    flex: 1;
    width: auto;
}
.side-tabs button {
    display: block;
    width: 100%;
    height: 50px;
}
.side-tabs .active {
    background-color: #2e3235;
}
.side-tabs svg {
    width: 24px;
    height: 24px;
    margin: auto;
    stroke: white;
}
.panel {
    flex: 1;
    display: flex;
    flex-direction: column;
    padding: 1px 5px 17px 3px;
    border-right: 1px solid #222527;
}
.panel, .layouts, .statusbar {
    font-family: "Noto Sans", "Open Sans", sans-serif;
    font-size: 10px;
}
.panel-tools {
    display: flex;
    gap: 3px;
    height: 23px;
    padding-left: 2px;
}
.panel-tools svg {
    width: 16px;
    height: 16px;
}
.panel-tools .sep {
    width: 3px;
}
.panel-box {
    flex: 1;
    display: grid;
    grid-template-rows: 311fr 489fr;
    border: 1px solid #484c50;
}
.tree {
    list-style: none;
    padding: 2px 0 0 4px;
}
.tree li {
    display: flex;
    align-items: center;
    gap: 3px;
    height: 17px;
}
.tree svg {
    width: 16px;
    height: 16px;
}
.root, .props h3 {
    font-size: 11px;
    font-weight: bold;
}
.tree .level-1 {
    padding-left: 7px;
}
.tree .level-2 {
    padding-left: 27px;
}
.selected {
    background-color: #0a74da;
    padding: 1px 1px;
}
.toggle {
    width: 9px;
    height: 9px;
    background-color: #333;
    border: solid white;
    border-width: 4px 2px;
}
.props {
    position: relative;
}
.props h3 {
    display: flex;
    align-items: center;
    gap: 5px;
    height: 17px;
    padding-left: 4px;
    background-color: #434649;
}
.props table {
    width: 100%;
    table-layout: fixed;
    border-collapse: collapse;
}
.props tr {
    height: 17px;
    border-bottom: 1px solid #32363a;
}
.props th, .props td {
    padding: 0;
    white-space: nowrap;
}
.props th {
    width: 132px;
    padding-left: 17px;
    font-weight: normal;
    text-align: left;
}
.props td svg {
    display: inline-block;
    width: 16px;
    height: 14px;
    vertical-align: bottom;
}
.cursor {
    position: absolute;
    left: 153px;
    top: 126px;
    width: 32px;
    height: 36px;
}

/* document */
.doc-tabs {
    display: flex;
    height: 19px;
    font: 11px/19px "Liberation Sans", Arial, sans-serif;
}
.doc-tab {
    display: flex;
    align-items: center;
    gap: 13px;
    padding: 0 8px 0 10px;
    background-color: #191a1c;
    border-right: 1px solid #2e3235;
}
.doc-tab.open {
    background-color: #2e3235;
    font-weight: bold;
}
.doc-tabs svg {
    width: 10px;
    height: 10px;
    margin: auto;
}
.doc-add {
    width: 24px;
    background-color: #191a1c;
}
.viewport {
    position: relative;
    flex: 1;
    min-height: 0;
    background: linear-gradient(#7b7b7b, #777 45%, #5b5b5b 76%, #434343 97%);
}
.drawing {
    width: 100%;
    height: 100%;
    stroke: none;
}
.edge, .top-edge {
    stroke: #2f72d2;
}
.edge {
    fill: none;
}
.command {
    position: absolute;
    left: 1px;
    bottom: 6px;
    width: 79%;
    display: flex;
    align-items: center;
    gap: 5px;
    height: 17px;
    padding: 0 10px 0 4px;
    background-color: #383839;
    color: #ccc;
    font: 12px "DejaVu Sans Mono", monospace;
}
.command input {
    flex: 1;
    font-style: italic;
}
.command input::placeholder {
    color: #8e8e8e;
}
.command-min {
    width: 11px;
    height: 6px;
    background-color: #e8e8e8;
}
.layouts {
    display: flex;
    align-items: stretch;
    height: 17px;
    border-bottom: 1px solid #55585a;
}
.layouts button {
    padding: 0 4px;
    background-color: #191a1c;
}
.layouts .nav {
    width: 17px;
    border-right: 1px solid #55585a;
}
.layouts svg {
    width: 10px;
    height: 10px;
    margin: auto;
}
.layouts .list {
    width: 17px;
    padding: 0 2px;
}
.layouts .list svg {
    width: 13px;
    height: 14px;
}
.layouts .model {
    padding: 0 2px;
    font-weight: bold;
    background-color: #2e3235;
}

/* status bar */
.statusbar {
    display: flex;
    justify-content: flex-end;
    height: 18px;
    padding-bottom: 1px;
    background-color: #131416;
    border-bottom: 2px solid #2c9c80;
}
.statusbar button {
    padding: 0 1px;
    border-left: 1px solid #55585a;
}
.coords {
    padding: 1px 2px 0 0;
}
.statusbar .on {
    background-color: #3b3f44;
}
.statusbar .off {
    color: #5f6266;
}
.statusbar .roomy {
    padding-left: 4px;
}
.resize {
    width: 10px;
    height: 10px;
    margin: 5px 2px 0 12px;
}
.page-bottom {
    height: 38px;
}
```
